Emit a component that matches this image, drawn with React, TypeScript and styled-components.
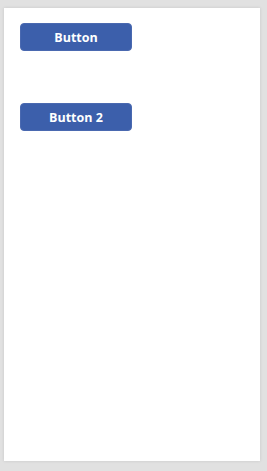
import React from "react";
import styled, { createGlobalStyle } from "styled-components";

const Global = createGlobalStyle`
  html, body { margin: 0; padding: 0; background: #e1e1e1; }
  body { font-family: "Open Sans", "Liberation Sans", sans-serif; }
`;

const Page = styled.div`
  width: 267px;
  height: 471px;
  box-sizing: border-box;
  padding: 8px 7px 10px 4px;
  display: flex;
`;

const Screen = styled.div`
  flex: 1;
  background: #ffffff;
  box-shadow: 0 0 3px rgba(0, 0, 0, 0.12);
  display: flex;
  flex-direction: column;
  align-items: flex-start;
  padding: 15px 0 0 16px;
  gap: 52px;
`;

const Button = styled.button`
  width: 112px;
  height: 28px;
  box-sizing: border-box;
  background: #3c5fab;
  border: 1px solid #4a69b0;
  border-radius: 4px;
  color: #ffffff;
  font-family: "Open Sans", "Liberation Sans", sans-serif;
  font-weight: 700;
  font-size: 12.5px;
  padding: 1px 0 0;
  display: flex;
  align-items: center;
  justify-content: center;
`;

export default function App() {
  return (
    <>
      <Global />
      <Page>
        <Screen>
          <Button>Button</Button>
          <Button>Button 2</Button>
        </Screen>
      </Page>
    </>
  );
}
